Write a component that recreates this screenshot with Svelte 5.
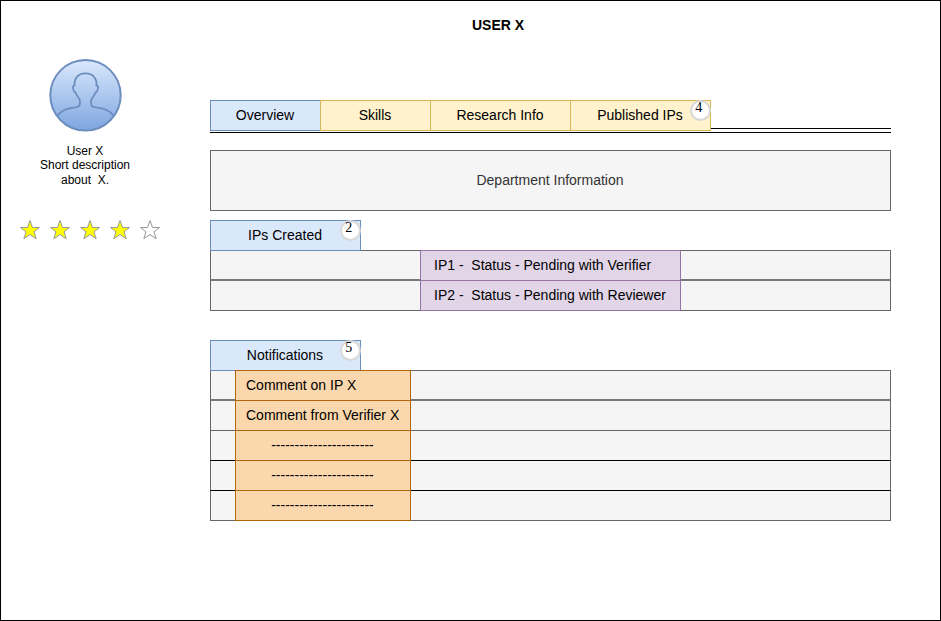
<script>
  const tabs = [
    { label: 'Overview', width: 111, active: true },
    { label: 'Skills', width: 111 },
    { label: 'Research Info', width: 141 },
    { label: 'Published IPs', width: 141, count: 4 },
  ];
  const ips = ['IP1 -\u00a0 Status - Pending with Verifier', 'IP2 -\u00a0 Status - Pending with Reviewer'];
  const dashes = '-'.repeat(22);
  const notes = [
    { text: 'Comment on IP X' },
    { text: 'Comment from Verifier X', heavy: true },
    { text: dashes, center: true },
    { text: dashes, center: true, dark: true },
    { text: dashes, center: true, dark: true },
  ];
  const stars = [true, true, true, true, false];
</script>

{#snippet badge(count)}
  <span class="badge"><span class="count">{count}</span></span>
{/snippet}

<div class="page">
  <h1>USER X</h1>
  <div class="columns">
    <aside>
      <svg class="avatar" width="74" height="74" viewBox="0 0 74 74">
        <defs>
          <linearGradient id="sky" x1="0" y1="0" x2="0" y2="1">
            <stop offset="0" stop-color="#dae8fc" />
            <stop offset="1" stop-color="#7ea6e0" />
          </linearGradient>
        </defs>
        <circle cx="37.5" cy="37.3" r="35.2" fill="url(#sky)" stroke="#6c8ebf" stroke-width="2" />
        <path
          d="M9.500 57.500C13 53 19 50.600 25.500 49.700C30 49.300 32 48.500 31.900 46V43C31.900 39.500 29 39.500 27.600 34.500C26 34.200 25.200 32 25 29.500C24.900 28.200 25.500 27.500 26.500 27.500C26 20.500 30 15.400 37.500 15.400C45 15.400 49 20.500 48.500 27.500C49.500 27.500 50.100 28.200 50 29.500C49.800 32 49 34.200 47.400 34.500C46 39.500 43.100 39.500 43.100 43V46C43 48.500 45 49.300 49.500 49.700C56 50.600 62 53 65.500 57.500"
          fill="none" stroke="#6c8ebf" stroke-width="1.8" />
      </svg>
      <p>User X<br />Short description<br />about&nbsp; X.</p>
      <div class="stars">
        {#each stars as filled}
          <svg width="20" height="20" viewBox="0 0 20 20">
            <path class:filled d="M0.500 7.500H7.500L10 0.500L12.500 7.500H19.500L14 11.800L16.200 18.700L10 14.500L3.800 18.700L6 11.800Z" />
          </svg>
        {/each}
      </div>
    </aside>
    <main>
      <nav>
        {#each tabs as tab}
          <div class="tab" class:active={tab.active} style:width="{tab.width}px">
            {tab.label}
            {#if tab.count}{@render badge(tab.count)}{/if}
          </div>
        {/each}
        <div class="rail"></div>
      </nav>
      <section class="department">Department Information</section>
      <section class="ips">
        <div class="tab active heading">IPs Created {@render badge(2)}</div>
        {#each ips as ip, i}
          <div class="row" class:heavy={i === 1}><div class="cell">{ip}</div></div>
        {/each}
      </section>
      <section class="notes">
        <div class="tab active heading">Notifications {@render badge(5)}</div>
        {#each notes as note}
          <div class="row" class:heavy={note.heavy} class:dark={note.dark}>
            <div class="cell" class:center={note.center}>{note.text}</div>
          </div>
        {/each}
      </section>
    </main>
  </div>
</div>

<style>
  .page, .page * { box-sizing: border-box; }
  .page {
    width: 941px;
    height: 621px;
    border: 1px solid #000;
    background: #fff;
    color: #000;
    font: 14px/17px "Liberation Sans", Arial, sans-serif;
  }
  h1 {
    margin: 0;
    padding: 16px 0 0 55px;
    height: 57px;
    font-size: 14px;
    line-height: 17px;
    text-align: center;
  }
  .columns { display: flex; }
  aside {
    width: 168px;
    margin-right: 41px;
    display: flex;
    flex-direction: column;
    align-items: center;
  }
  p {
    margin: 12px 0 0;
    font-size: 12px;
    line-height: 14.4px;
    text-align: center;
  }
  .avatar { overflow: visible; }
  .stars { display: flex; gap: 10px; margin: 32.8px 0 0 10px; }
  .stars svg { display: block; }
  .stars path { fill: #fff; stroke: #999; stroke-width: 1; }
  .stars path.filled { fill: #ff0; }
  main { width: 681px; padding-top: 42px; }
  nav {
    display: flex;
    padding-bottom: 1px;
    border-bottom: 1px solid #000;
  }
  .tab {
    position: relative;
    flex: none;
    height: 31px;
    padding-right: 1px;
    border: 1px solid #d6b656;
    background: #fff2cc;
    line-height: 29px;
    text-align: center;
  }
  .tab + .tab { margin-left: -1px; }
  .tab.active { border-color: #6c8ebf; background: #dae8fc; }
  .tab.heading { z-index: 1; width: 151px; }
  .rail { flex: 1; height: 29px; border-bottom: 1px solid #000; }
  .badge {
    position: absolute;
    top: -1.5px;
    right: -1px;
    width: 21.5px;
    height: 21.5px;
    border: 2px solid #d8d8d8;
    border-radius: 50%;
    background: #fff;
    font: 14px/16px "Liberation Serif", "Times New Roman", serif;
  }
  .count { display: block; margin: -1.5px 3px 0 0; }
  .department {
    height: 61px;
    margin-top: 17px;
    padding-right: 1px;
    border: 1px solid #666;
    background: #f5f5f5;
    color: #333;
    line-height: 59px;
    text-align: center;
  }
  .ips { margin-top: 9px; }
  .notes { margin-top: 29px; }
  .row {
    display: flow-root;
    height: 31px;
    margin-top: -1px;
    border: 1px solid #666;
    background: #f5f5f5;
  }
  .row.heavy {
    height: 32px;
    margin-top: -2px;
    border-top: 2px solid #777;
  }
  .row.dark { border-top-color: #000; }
  .cell {
    position: relative;
    z-index: 2;
    height: 31px;
    margin-top: -1px;
    border: 1px solid;
    line-height: 29px;
    white-space: nowrap;
  }
  .ips .cell {
    width: 261px;
    margin-left: 209px;
    padding-left: 13px;
    border-color: #9673a6;
    background: #e1d5e7;
  }
  .notes .cell {
    width: 176px;
    margin-left: 24px;
    padding-left: 10px;
    border-color: #b46504;
    background: #fad7ac;
  }
  .notes .cell.center { padding: 0 1px 0 0; text-align: center; }
</style>
